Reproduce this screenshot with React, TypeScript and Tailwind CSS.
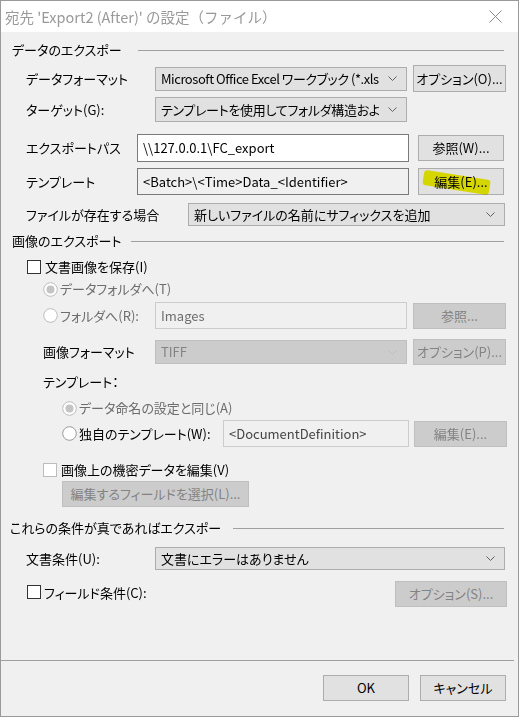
import React from "react";

const FONT = "font-['Noto_Sans_CJK_JP',sans-serif] [font-feature-settings:'palt']";

function Chevron({ color = "#606060" }: { color?: string }) {
  return (
    <svg width="9" height="5" viewBox="0 0 9 5" className="shrink-0">
      <polyline points="0.5,0.5 4.5,4.5 8.5,0.5" fill="none" stroke={color} strokeWidth="1" />
    </svg>
  );
}

function Select({ className, text, disabled, textClass = "" }: { className: string; text: string; disabled?: boolean; textClass?: string }) {
  return (
    <div
      className={
        "flex items-center pl-[5px] pr-[9px] border " +
        (disabled ? "bg-[#cccccc] border-[#bfbfbf] text-[#838383] " : "bg-[#e1e1e1] border-[#adadad] text-black ") +
        className
      }
    >
      <span className={"flex-1 min-w-0 whitespace-nowrap overflow-hidden leading-[18px] " + textClass}>{text}</span>
      <span className="ml-[6px]">
        <Chevron color={disabled ? "#bdbdbd" : "#606060"} />
      </span>
    </div>
  );
}

function Button({ className, children, disabled }: { className: string; children: React.ReactNode; disabled?: boolean }) {
  return (
    <div
      className={
        "relative flex items-center justify-center border whitespace-nowrap " +
        (disabled ? "bg-[#cccccc] border-[#bfbfbf] text-[#838383] " : "bg-[#e1e1e1] border-[#adadad] text-black ") +
        className
      }
    >
      {children}
    </div>
  );
}

function Field({ className, text, variant }: { className: string; text: string; variant: "white" | "readonly" | "disabled" }) {
  const v =
    variant === "white"
      ? "bg-white border-[#7a7a7a] text-black"
      : variant === "readonly"
      ? "bg-[#f0f0f0] border-[#7a7a7a] text-black"
      : "bg-[#f0f0f0] border-[#cccccc] text-[#6d6d6d]";
  return (
    <div className={"flex items-center pl-[5px] border whitespace-nowrap leading-[16px] " + v + " " + className}>
      {text}
    </div>
  );
}

function Checkbox({ disabled }: { disabled?: boolean }) {
  return (
    <div
      className={
        "w-[14px] h-[14px] border shrink-0 " +
        (disabled ? "bg-white border-[#bcbcbc]" : "bg-white border-[#333333]")
      }
    />
  );
}

function Radio({ checked, border = "#bcbcbc" }: { checked?: boolean; border?: string }) {
  return (
    <svg width="15" height="15" viewBox="0 0 15 15" className="shrink-0">
      <circle cx="7.5" cy="7.5" r="6.8" fill="#ffffff" stroke={border} strokeWidth="1" />
      {checked && <circle cx="7.5" cy="7.5" r="4" fill="#c4c4c4" />}
    </svg>
  );
}

function Header({ text, className, lineMl }: { text: string; className: string; lineMl: string }) {
  return (
    <div className={"flex items-center h-[18px] pr-[14px] " + className}>
      <span className="whitespace-nowrap leading-[16px]">{text}</span>
      <div className={"flex-1 h-px bg-[#a0a0a0] " + lineMl} />
    </div>
  );
}

export default function App() {
  return (
    <div className={"w-[519px] h-[717px] border border-[#9a9a9a] bg-[#f0f0f0] flex flex-col text-[13px] leading-[16px] text-black " + FONT}>
      {/* Title bar */}
      <div className="h-[31px] bg-white flex items-center shrink-0">
        <span className="pl-[4px] text-[14.5px] leading-[18px] text-[#999999] whitespace-nowrap [font-feature-settings:normal]">
          宛先 'Export2 (After)' の設定（ファイル）
        </span>
        <div className="flex-1" />
        <svg width="13" height="13" viewBox="0 0 13 13" className="mr-[16px] mt-[-1px]">
          <line x1="0.5" y1="0.5" x2="12.5" y2="12.5" stroke="#8a8a8a" strokeWidth="1" />
          <line x1="12.5" y1="0.5" x2="0.5" y2="12.5" stroke="#8a8a8a" strokeWidth="1" />
        </svg>
      </div>

      {/* Body */}
      <div className="flex-1 flex flex-col">
        <Header text="データのエクスポー" className="mt-[9px] pl-[11px]" lineMl="ml-[16px]" />

        <div className="flex items-center h-[27px] mt-[6px] pl-[25px]">
          <span className="w-[129px]">データフォーマット</span>
          <Select className="w-[252px] h-[24px]" textClass="tracking-[-0.45px]" text="Microsoft Office Excel ワークブック (*.xls" />
          <Button className="w-[93px] h-[27px] ml-[6px]">オプション(O)...</Button>
        </div>

        <div className="flex items-center h-[25px] mt-[5px] pl-[25px]">
          <span className="w-[129px]">ターゲット(G):</span>
          <Select className="w-[252px] h-[25px]" textClass="tracking-[-0.3px]" text="テンプレートを使用してフォルダ構造およ" />
        </div>

        <div className="flex items-center h-[28px] mt-[12px] pl-[25px]">
          <span className="w-[111px]">エクスポートパス</span>
          <Field className="w-[272px] h-[28px]" text="\\127.0.0.1\FC_export" variant="white" />
          <Button className="w-[86px] h-[26px] ml-[9px]">参照(W)...</Button>
        </div>

        <div className="flex items-center h-[27px] mt-[6px] pl-[25px]">
          <span className="w-[111px]">テンプレート</span>
          <Field className="w-[272px] h-[27px]" text="<Batch>\<Time>Data_<Identifier>" variant="readonly" />
          <Button className="w-[86px] h-[27px] ml-[9px]">
            <span>編集(E)...</span>
            <div className="absolute left-[4px] top-[6px] w-[67px] h-[15px] bg-[#f2f200] mix-blend-multiply rotate-[9deg] rounded-[3px]" />
          </Button>
        </div>

        <div className="flex items-center h-[23px] mt-[8px] pl-[25px]">
          <span className="w-[162px]">ファイルが存在する場合</span>
          <Select className="w-[317px] h-[23px]" text="新しいファイルの名前にサフィックスを追加" />
        </div>

        <Header text="画像のエクスポート" className="mt-[6px] pl-[11px]" lineMl="ml-[10px]" />

        <div className="flex items-center h-[15px] mt-[9px] pl-[26px]">
          <Checkbox />
          <span className="ml-[4px]">文書画像を保存(I)</span>
        </div>

        <div className="flex items-center h-[16px] mt-[7px] pl-[42px] text-[#6d6d6d]">
          <Radio checked />
          <span className="ml-[2px]">データフォルダへ(T)</span>
        </div>

        <div className="flex items-center h-[27px] mt-[5px] pl-[42px]">
          <Radio />
          <span className="ml-[2px] w-[95px] text-[#6d6d6d]">フォルダへ(R):</span>
          <Field className="w-[252px] h-[27px]" text="Images" variant="disabled" />
          <Button disabled className="w-[93px] h-[26px] ml-[6px]">参照...</Button>
        </div>

        <div className="flex items-center h-[26px] mt-[10px] pl-[42px]">
          <span className="w-[112px]">画像フォーマット</span>
          <Select disabled className="w-[252px] h-[24px]" text="TIFF" />
          <Button disabled className="w-[93px] h-[26px] ml-[6px]">オプション(P)...</Button>
        </div>

        <div className="flex items-center h-[16px] mt-[9px] pl-[42px]">
          <span>テンプレート：</span>
        </div>

        <div className="flex items-center h-[16px] mt-[10px] pl-[61px] text-[#6d6d6d]">
          <Radio checked />
          <span className="ml-[2px]">データ命名の設定と同じ(A)</span>
        </div>

        <div className="flex items-center h-[27px] mt-[4px] pl-[61px]">
          <Radio border="#9a9a9a" />
          <span className="ml-[2px] w-[144px]">独自のテンプレート(W):</span>
          <Field className="w-[186px] h-[27px] !text-[#444444]" text="<DocumentDefinition>" variant="disabled" />
          <Button disabled className="w-[93px] h-[26px] ml-[5px]">編集(E)...</Button>
        </div>

        <div className="flex items-center h-[15px] mt-[15px] pl-[42px]">
          <Checkbox disabled />
          <span className="ml-[4px]">画像上の機密データを編集(V)</span>
        </div>

        <div className="flex items-center h-[26px] mt-[4px] pl-[61px]">
          <Button disabled className="w-[187px] h-[26px]">編集するフィールドを選択(L)...</Button>
        </div>

        <Header text="これらの条件が真であればエクスポー" className="mt-[12px] pl-[9px]" lineMl="ml-[12px]" />

        <div className="flex items-center h-[23px] mt-[10px] pl-[25px]">
          <span className="w-[129px]">文書条件(U):</span>
          <Select className="w-[350px] h-[23px]" text="文書にエラーはありません" />
        </div>

        <div className="flex items-center h-[26px] mt-[11px] pl-[26px]">
          <div className="self-start mt-[4px]">
            <Checkbox />
          </div>
          <span className="ml-[3px] self-start mt-[4px]">フィールド条件(C):</span>
          <div className="flex-1" />
          <Button disabled className="w-[112px] h-[26px] mr-[11px]">オプション(S)...</Button>
        </div>

        <div className="flex-1" />

        {/* Footer */}
        <div className="h-[56px] border-t border-[#a0a0a0] mr-[4px] flex justify-end items-start">
          <Button className="w-[86px] h-[26px] mt-[14px]">OK</Button>
          <Button className="w-[86px] h-[26px] mt-[14px] ml-[11px] mr-[8px]">キャンセル</Button>
        </div>
      </div>
    </div>
  );
}
